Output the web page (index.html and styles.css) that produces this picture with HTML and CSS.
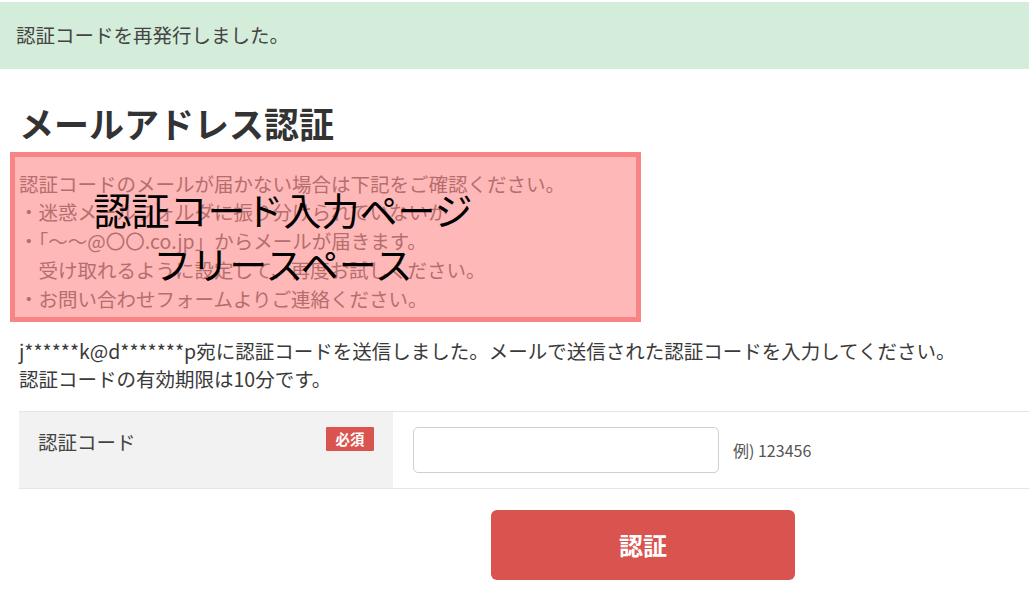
FILE: index.html
```html
<!DOCTYPE html>
<html lang="ja">
<head>
<meta charset="utf-8">
<title>メールアドレス認証</title>
<link rel="stylesheet" href="styles.css">
</head>
<body>
<div class="alert">認証コードを再発行しました。</div>
<main class="page">
  <h1 class="title">メールアドレス認証</h1>
  <div class="freespace">
    <p class="freespace-text">認証コードのメールが届かない場合は下記をご確認ください。<br>・迷惑メールフォルダに振り分けられていないか<br>・「～～@〇〇.co.jp」からメールが届きます。<br><span class="indent">受け取れるように設定して、再度お試しください。</span><br>・お問い合わせフォームよりご連絡ください。</p>
    <div class="freespace-overlay"></div>
    <div class="freespace-label">認証コード入力ページ<br>フリースペース</div>
  </div>
  <p class="lead">j******k@d*******p宛に認証コードを送信しました。メールで送信された認証コードを入力してください。<br>認証コードの有効期限は10分です。</p>
  <div class="form-row">
    <div class="form-label">
      <span class="label-text">認証コード</span>
      <span class="badge">必須</span>
    </div>
    <div class="form-field">
      <input class="input" type="text" aria-label="認証コード">
      <span class="example">例) 123456</span>
    </div>
  </div>
  <div class="actions">
    <button class="btn" type="button">認証</button>
  </div>
</main>
</body>
</html>
```
FILE: styles.css
```css
html, body {
  margin: 0;
  padding: 0;
  overflow: hidden;
}
body {
  font-family: "Noto Sans CJK JP", "Noto Sans", sans-serif;
  color: #3a3a3a;
  background: #fff;
  font-size: 19.5px;
  line-height: 1.5;
}
.alert {
  margin-top: 2px;
  height: 67px;
  box-sizing: border-box;
  padding: 19px 16px;
  background: #d4ecda;
  color: #444;
  font-size: 19.5px;
  line-height: 28.8px;
}
.page {
  width: 1248px;
  margin: 0 0 0 19px;
}
.title {
  margin: 34px 0 0;
  font-size: 35px;
  line-height: 40.32px;
  font-weight: 700;
  color: #333;
}
.freespace {
  position: relative;
  margin-top: 26.3px;
}
.freespace-text {
  margin: 0;
  color: #999;
  line-height: 28.8px;
}
.indent {
  padding-left: 1em;
}
.freespace-overlay {
  position: absolute;
  left: -9px;
  top: -17.6px;
  width: 631px;
  height: 170px;
  box-sizing: border-box;
  background: rgba(255, 0, 0, 0.278);
  border: 5px solid rgba(235, 13, 20, 0.3);
}
.freespace-label {
  position: absolute;
  left: 0;
  top: 12.4px;
  width: 528px;
  text-align: center;
  font-size: 38px;
  line-height: 54px;
  color: #000;
}
.lead {
  margin: 23px 0 0;
  line-height: 28.8px;
  color: #3a3a3a;
}
.form-row {
  display: flex;
  margin-top: 16.8px;
  border-top: 1px solid #e6e6e6;
  border-bottom: 1px solid #e6e6e6;
}
.form-label {
  width: 374px;
  box-sizing: border-box;
  background: #f2f2f2;
  padding: 15px 19px;
  display: flex;
  justify-content: space-between;
  align-items: flex-start;
}
.label-text {
  line-height: 28.8px;
  margin-top: 1px;
  color: #444;
}
.badge {
  width: 48px;
  height: 24px;
  line-height: 24px;
  text-align: center;
  background: #d9534f;
  color: #fff;
  font-size: 14.4px;
  font-weight: 700;
  border-radius: 1px;
}
.form-field {
  flex: 1;
  padding: 15px 20px;
  display: flex;
  align-items: center;
  gap: 14px;
}
.input {
  width: 306px;
  height: 46px;
  box-sizing: border-box;
  border: 1px solid #cfcfcf;
  border-radius: 5px;
  background: #fff;
  margin: 0;
  padding: 0 10px;
  font: inherit;
}
.example {
  font-size: 16px;
  color: #555;
  line-height: 24px;
}
.actions {
  display: flex;
  justify-content: center;
  margin-top: 21px;
}
.btn {
  width: 304px;
  height: 70px;
  border: none;
  border-radius: 6px;
  background: #d9534f;
  color: #fff;
  font-family: "Noto Sans CJK JP", sans-serif;
  font-size: 24px;
  font-weight: 700;
  cursor: pointer;
}
```
